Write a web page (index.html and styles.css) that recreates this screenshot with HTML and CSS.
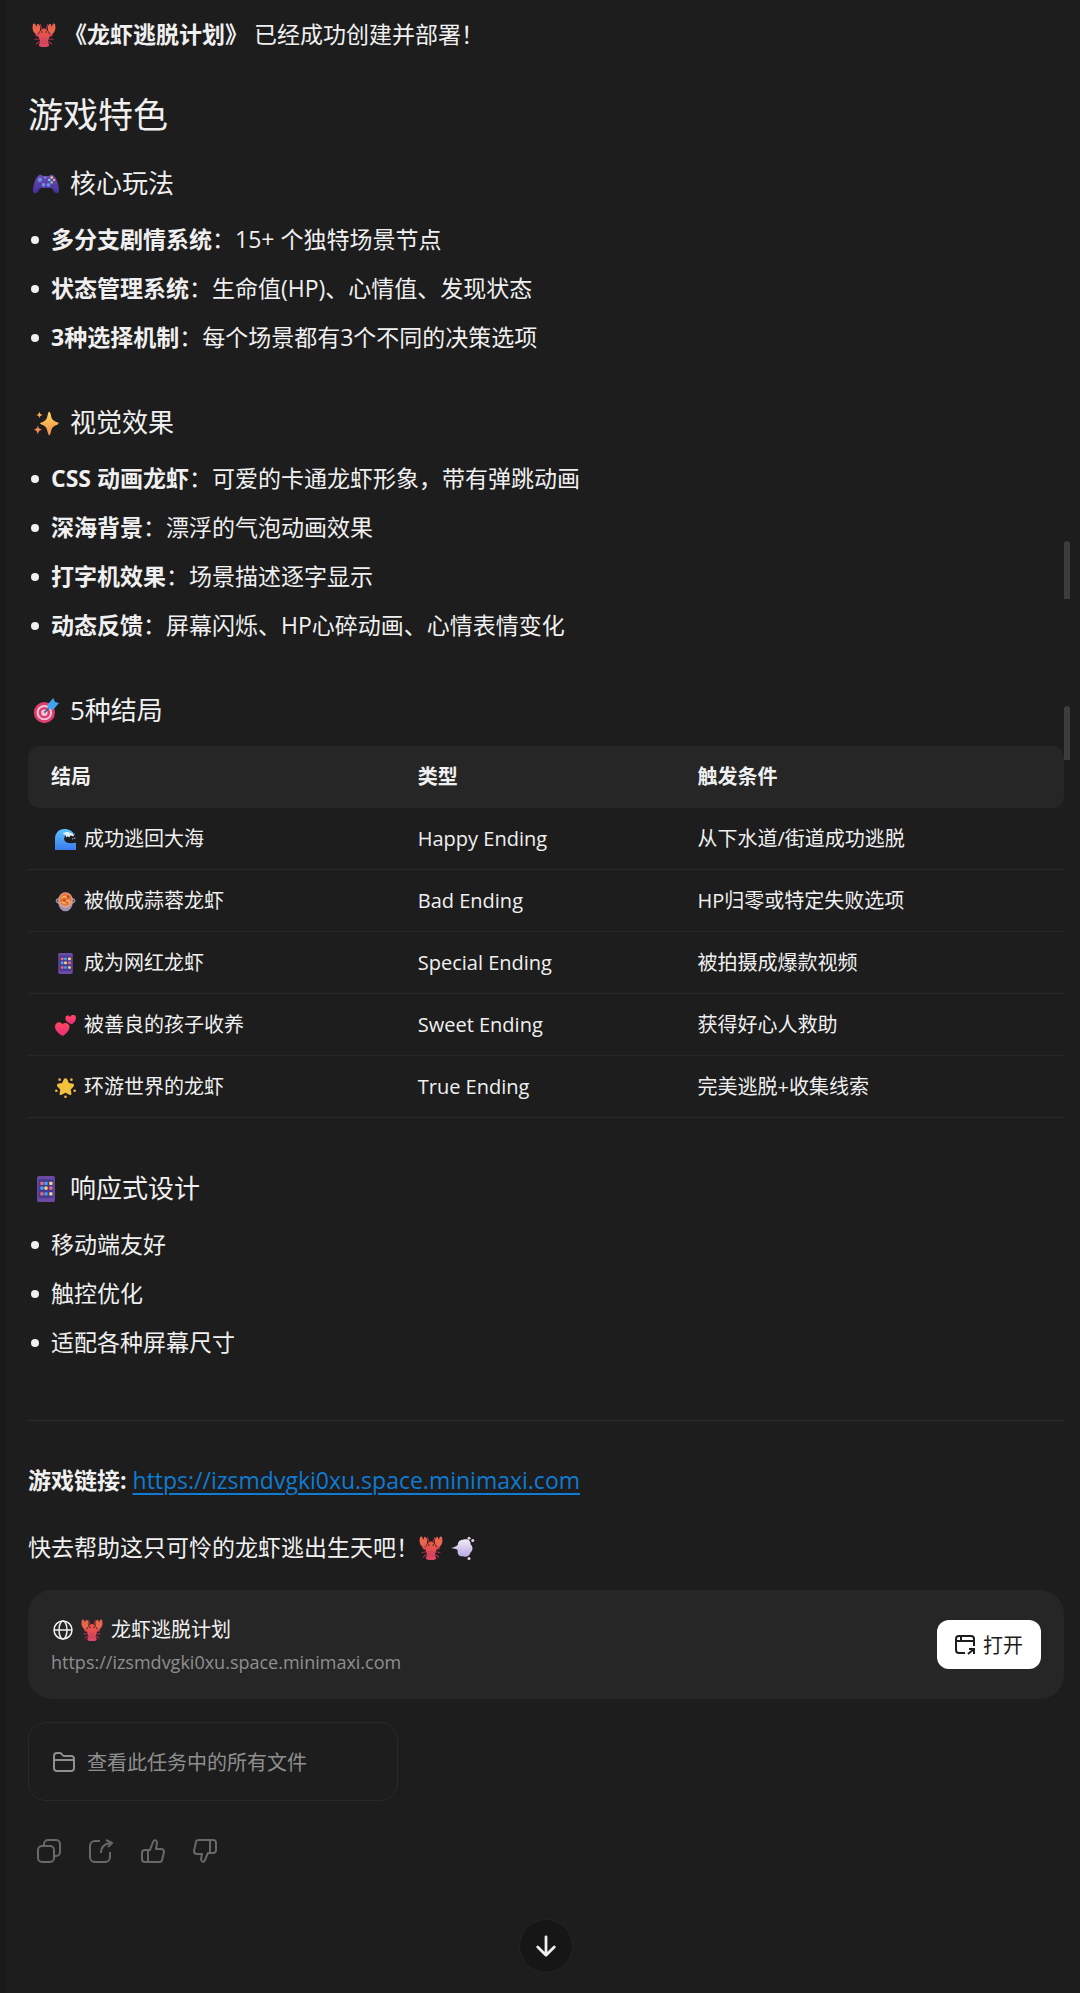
FILE: index.html
```html
<!DOCTYPE html>
<html lang="zh-CN">
<head>
  <meta charset="UTF-8" />
  <meta name="viewport" content="width=device-width, initial-scale=1.0"/>
  <title>龙虾逃脱计划</title>
  <link rel="stylesheet" href="styles.css">
</head>
<body>
  <!-- Shared icons -->
  <svg class="sprite" aria-hidden="true">
    <defs>
      <linearGradient id="gLobster" x1="0" y1="0" x2="0" y2="1">
        <stop offset="0" stop-color="#e8593f"/><stop offset="1" stop-color="#de4468"/>
      </linearGradient>
      <linearGradient id="gPad" x1="0" y1="0" x2="0" y2="1">
        <stop offset="0" stop-color="#6c4fb0"/><stop offset="1" stop-color="#44309a"/>
      </linearGradient>
      <linearGradient id="gSpark" x1="0" y1="0" x2="0" y2="1">
        <stop offset="0" stop-color="#ffd95e"/><stop offset="1" stop-color="#f78a4a"/>
      </linearGradient>
      <linearGradient id="gWave" x1="0" y1="0" x2="0" y2="1">
        <stop offset="0" stop-color="#5cc4fb"/><stop offset="1" stop-color="#3b7bf0"/>
      </linearGradient>
      <linearGradient id="gHeart" x1="0" y1="0" x2="0" y2="1">
        <stop offset="0" stop-color="#ff4a5c"/><stop offset="1" stop-color="#ee2a80"/>
      </linearGradient>
      <linearGradient id="gPuff" x1="0" y1="0" x2="0" y2="1">
        <stop offset="0" stop-color="#f1ebfa"/><stop offset="1" stop-color="#b9a9dc"/>
      </linearGradient>
    </defs>
    <symbol id="lobster" viewBox="0 0 32 32">
      <g fill="none" stroke="#a82f4c" stroke-width="1.6" stroke-linecap="round">
        <path d="M10 18 5 17M10 21l-6 1M11 24l-5 4M22 18l5-1M22 21l6 1M21 24l5 4M14 10 11 2M18 10l3-8"/>
      </g>
      <path d="M11 17C6 16 5 14 5 10M21 17c5-1 6-3 6-7" fill="none" stroke="#d94559" stroke-width="4"/>
      <path d="M1 3c0-2 2-3 3-2l2 4 1-4c3 0 4 3 4 6 0 4-2 7-5 7C2 14 0 9 1 3zM31 3c0-2-2-3-3-2l-2 4-1-4c-3 0-4 3-4 6 0 4 2 7 5 7 4 0 6-5 5-11z" fill="#e9654b"/>
      <path d="M16 7c5 2 7 6 7 11 0 3-2 5-2 7l2 5c-2 3-12 3-14 0l2-5c0-2-2-4-2-7 0-5 2-9 7-11z" fill="url(#gLobster)"/>
      <path d="M12 21h8M12 24h8M12 27h8" stroke="#c23a5c" stroke-width="1"/>
      <circle cx="13" cy="12" r="1" fill="#3a1620"/><circle cx="19" cy="12" r="1" fill="#3a1620"/>
    </symbol>
    <symbol id="gamepad" viewBox="0 0 32 32">
      <path d="M8 5c2-1 3 1 5 1h6c2 0 3-2 5-1 4 1 8 12 8 19 0 5-5 4-7 0-1-2-2-3-4-3H11c-2 0-3 1-4 3-2 4-7 5-7 0C0 17 4 6 8 5z" fill="url(#gPad)"/>
      <circle cx="8.500" cy="11" r="2.600" fill="#6d8de8"/><circle cx="13" cy="17" r="2.300" fill="#6d8de8"/><circle cx="19" cy="17" r="2.300" fill="#6d8de8"/>
      <circle cx="15" cy="8" r="1" fill="#9fc4ff"/>
      <circle cx="23" cy="8" r="1.500" fill="#ffd75a"/><circle cx="20" cy="11" r="1.500" fill="#62d2ff"/><circle cx="26" cy="11" r="1.500" fill="#ff8a8a"/><circle cx="23" cy="14" r="1.500" fill="#8de08a"/>
    </symbol>
    <symbol id="sparkles" viewBox="0 0 32 32" fill="url(#gSpark)">
      <path d="M20 2c1 0 1 1 2 4 1 5 2 7 8 9 2 1 2 2 0 3-6 2-7 4-8 9-1 3-1 4-2 4s-1-1-2-4c-1-5-2-7-7-9-3-1-3-2 0-3 5-2 6-4 7-9 1-3 1-4 2-4z"/>
      <path d="M8 2c1 3 1 3 4 4-3 1-3 1-4 4-1-3-1-3-4-4 3-1 3-1 4-4z"/>
      <path d="M6 19c1 4 2 4 5 5-3 1-4 2-5 6-1-4-2-5-5-6 3-1 4-1 5-5z" fill="#f58b5c"/>
    </symbol>
    <symbol id="target" viewBox="0 0 32 32">
      <circle cx="14" cy="18" r="13" fill="#dc3d6b"/><circle cx="14" cy="18" r="9.500" fill="#f2c4d8"/><circle cx="14" cy="18" r="7" fill="#dc3d6b"/><circle cx="14" cy="18" r="4" fill="#f2c4d8"/>
      <path d="M14 18 23 9" stroke="#505a8c" stroke-width="2"/>
      <path d="M18 8l7-8 2 5 5 1-7 8-7-1z" fill="#3fa4f2"/>
    </symbol>
    <symbol id="wave" viewBox="0 0 32 32">
      <path d="M0 32V15C0 6 6 0 14 0c8 0 14 4 15 9l-4-1c-7-1-11 2-11 7 0 6 7 8 18 6v11z" fill="url(#gWave)"/>
      <path d="M12 7c3-3 9-3 11-1 4 0 5 2 6 5-3 0-4-2-6-1l-1 3-3-2-2 2-1-4z" fill="#dff3ff"/>
      <g fill="#a4d8ff"><circle cx="29" cy="8" r="1"/><circle cx="27" cy="15" r="1"/><circle cx="30" cy="14" r="1"/></g>
    </symbol>
    <symbol id="pan" viewBox="0 0 32 32">
      <ellipse cx="16" cy="15" rx="14" ry="5" fill="none" stroke="#9a8fa8" stroke-width="2.500"/>
      <ellipse cx="16" cy="17" rx="11" ry="14" fill="#9d8fb5"/>
      <ellipse cx="16" cy="14" rx="11" ry="12" fill="#d8a090"/>
      <ellipse cx="16" cy="13" rx="9" ry="9.500" fill="#e87535"/>
      <path d="M11 10c2-3 5-2 6 0M18 15c3-2 5 0 4 3M11 17l4 2" fill="none" stroke="#ffc069" stroke-width="2" stroke-linecap="round"/>
      <circle cx="20" cy="9" r="2" fill="#c4412c"/><circle cx="14" cy="14" r="2" fill="#bd4a2c"/>
    </symbol>
    <symbol id="phone" viewBox="0 0 32 32">
      <rect x="5" y="0" width="22" height="32" rx="2" fill="#6b4aa3"/>
      <rect x="7" y="4" width="18" height="23" rx="1" fill="#453a8e"/>
      <g fill="#ee6b75"><rect x="9" y="7" width="4" height="4" rx="1"/><rect x="20" y="13" width="4" height="4" rx="1"/><rect x="9" y="20" width="4" height="4" rx="1"/></g>
      <g fill="#42a5f5"><rect x="14" y="7" width="4" height="4" rx="1"/><rect x="9" y="13" width="4" height="4" rx="1"/><rect x="14" y="20" width="4" height="4" rx="1"/></g>
      <g fill="#ffd77a"><rect x="20" y="7" width="4" height="4" rx="1"/><rect x="14" y="13" width="4" height="4" rx="1"/><rect x="20" y="20" width="4" height="4" rx="1"/></g>
    </symbol>
    <symbol id="hearts" viewBox="0 0 32 32" fill="url(#gHeart)">
      <path d="M12 32C6 29 0 24 0 18c0-7 8-9 11-4 4-4 12-1 11 5-1 6-6 10-10 13z"/>
      <path d="M26 14c-5-1-9-4-10-7-1-6 4-8 7-4 2-5 9-4 9 1 0 4-3 8-6 10z"/>
    </symbol>
    <symbol id="star" viewBox="0 0 32 32" fill="#f3c23c">
      <path d="M16 2c1 0 2 1 3 2l2 5 5 1c3 0 4 3 2 5l-4 4 1 6c0 2-1 3-3 2l-6-3-6 3c-2 1-3 0-3-2l1-6-4-4c-2-2-1-5 2-5l5-1 2-5c1-1 2-2 3-2z"/>
      <g fill="#f2b24a"><circle cx="7" cy="4" r="2"/><circle cx="25" cy="4" r="2"/><circle cx="2" cy="21" r="2"/><circle cx="30" cy="21" r="2"/><circle cx="16" cy="30" r="2"/></g>
    </symbol>
    <symbol id="dash" viewBox="0 0 32 32">
      <path d="M0 16c4-1 7-2 9-4 0-4 3-7 7-7 5-2 11 1 10 6 4 3 3 9 0 11-1 5-6 7-10 5-5 1-8-3-7-8-2-2-5-2-9-3z" fill="url(#gPuff)"/>
      <g fill="#ded4ee"><circle cx="24" cy="3" r="2"/><circle cx="29" cy="6" r="2"/><circle cx="24" cy="30" r="2"/></g>
    </symbol>
  </svg>

  <main class="message">
    <p class="intro"><svg class="emoji"><use href="#lobster"/></svg><strong>《龙虾逃脱计划》</strong> 已经成功创建并部署！</p>

    <h2>游戏特色</h2>

    <h3><svg class="emoji"><use href="#gamepad"/></svg>核心玩法</h3>
    <ul>
      <li><strong>多分支剧情系统</strong>：15+ 个独特场景节点</li>
      <li><strong>状态管理系统</strong>：生命值(HP)、心情值、发现状态</li>
      <li><strong>3种选择机制</strong>：每个场景都有3个不同的决策选项</li>
    </ul>

    <h3><svg class="emoji"><use href="#sparkles"/></svg>视觉效果</h3>
    <ul>
      <li><strong>CSS 动画龙虾</strong>：可爱的卡通龙虾形象，带有弹跳动画</li>
      <li><strong>深海背景</strong>：漂浮的气泡动画效果</li>
      <li><strong>打字机效果</strong>：场景描述逐字显示</li>
      <li><strong>动态反馈</strong>：屏幕闪烁、HP心碎动画、心情表情变化</li>
    </ul>

    <h3><svg class="emoji"><use href="#target"/></svg>5种结局</h3>
    <table>
      <thead>
        <tr><th class="col-name">结局</th><th class="col-type">类型</th><th>触发条件</th></tr>
      </thead>
      <tbody>
        <tr><td><svg class="emoji"><use href="#wave"/></svg>成功逃回大海</td><td>Happy Ending</td><td>从下水道/街道成功逃脱</td></tr>
        <tr><td><svg class="emoji"><use href="#pan"/></svg>被做成蒜蓉龙虾</td><td>Bad Ending</td><td>HP归零或特定失败选项</td></tr>
        <tr><td><svg class="emoji"><use href="#phone"/></svg>成为网红龙虾</td><td>Special Ending</td><td>被拍摄成爆款视频</td></tr>
        <tr><td><svg class="emoji"><use href="#hearts"/></svg>被善良的孩子收养</td><td>Sweet Ending</td><td>获得好心人救助</td></tr>
        <tr><td><svg class="emoji"><use href="#star"/></svg>环游世界的龙虾</td><td>True Ending</td><td>完美逃脱+收集线索</td></tr>
      </tbody>
    </table>

    <h3 class="after-table"><svg class="emoji"><use href="#phone"/></svg>响应式设计</h3>
    <ul>
      <li>移动端友好</li>
      <li>触控优化</li>
      <li>适配各种屏幕尺寸</li>
    </ul>

    <hr>

    <p class="game-link"><strong>游戏链接:</strong> <a href="https://izsmdvgki0xu.space.minimaxi.com">https://izsmdvgki0xu.space.minimaxi.com</a></p>
    <p class="outro">快去帮助这只可怜的龙虾逃出生天吧！<svg class="emoji"><use href="#lobster"/></svg><svg class="emoji"><use href="#dash"/></svg></p>

    <section class="site-card">
      <div class="site-info">
        <div class="site-title">
          <svg class="globe" viewBox="0 0 20 20"><circle cx="10" cy="10" r="9"/><ellipse cx="10" cy="10" rx="4" ry="9"/><path d="M1 10h18"/></svg>
          <svg class="emoji"><use href="#lobster"/></svg>
          <span>龙虾逃脱计划</span>
        </div>
        <div class="site-url">https://izsmdvgki0xu.space.minimaxi.com</div>
      </div>
      <button class="open-btn" type="button">
        <svg viewBox="0 0 20 20"><path d="M10 18H4a3 3 0 0 1-3-3V4a3 3 0 0 1 3-3h12a3 3 0 0 1 3 3v7M1 6h18M6 1v5M13 19l6-5M14 14h5v5"/></svg>
        打开
      </button>
    </section>

    <button class="files-btn" type="button">
      <svg viewBox="0 0 22 20"><path d="M1 8V4a3 3 0 0 1 3-3h3c2 0 2 3 4 3h7a3 3 0 0 1 3 3v9a3 3 0 0 1-3 3H4a3 3 0 0 1-3-3V8h20"/></svg>
      查看此任务中的所有文件
    </button>

    <div class="actions">
      <button type="button" aria-label="复制"><svg viewBox="0 0 24 24"><rect x="1" y="7" width="16" height="16" rx="4"/><path d="M7 7V5a4 4 0 0 1 4-4h8a4 4 0 0 1 4 4v8a4 4 0 0 1-4 4h-2"/></svg></button>
      <button type="button" aria-label="分享"><svg viewBox="0 0 24 24"><path d="M11 2H6a5 5 0 0 0-5 5v11a5 5 0 0 0 5 5h10a5 5 0 0 0 5-5v-5M12 14c0-5 3-9 9-10M17 1l6 3-4 4"/></svg></button>
      <button type="button" aria-label="赞"><svg viewBox="0 0 24 24"><path d="M7 11h2l3-8c1-3 4-2 4 1l-1 6h5c2 0 3 1 3 3l-2 8c0 1-1 2-3 2H4c-2 0-3-1-3-3v-6c0-2 1-3 3-3h3v12"/></svg></button>
      <button type="button" aria-label="踩"><svg viewBox="0 0 24 24"><path d="M17 14h-2l-3 7c-1 3-4 2-4-1l1-5H4c-2 0-3-1-3-3l2-9c0-1 1-2 3-2h14c2 0 3 1 3 3v7c0 2-1 3-3 3h-3V1"/></svg></button>
    </div>

    <button class="scroll-down" type="button" aria-label="滚动到底部">
      <svg viewBox="0 0 24 24"><path d="M12 2v20M3 13l9 9 9-9"/></svg>
    </button>

    <span class="thumb thumb-outer"></span>
    <span class="thumb thumb-inner"></span>
  </main>
</body>
</html>
```
FILE: styles.css
```css
* { margin: 0; padding: 0; box-sizing: border-box; }

body {
  background-color: #1d1d1d;
  color: #f0f0f0;
  font-family: "Open Sans", "Noto Sans CJK SC", sans-serif;
  font-size: 23px;
  line-height: 36px;
}

button { font-family: inherit; cursor: pointer; }

svg { flex-shrink: 0; }

.sprite { position: absolute; width: 0; height: 0; }

.message {
  position: relative;
  display: flex;
  flex-direction: column;
  padding: 16px 16px 20px 22px;
  border-left: 6px solid #191919;
}

.emoji {
  width: 24px;
  height: 24px;
  margin: 0 8px 0 4px;
  vertical-align: -4px;
}

h2 {
  margin-top: 39px;
  font-size: 35px;
  font-weight: 400;
  line-height: 48px;
}

h3 {
  margin-top: 48px;
  font-size: 26px;
  font-weight: 400;
  line-height: 36px;
}

h2 + h3 { margin-top: 26px; }
h3.after-table { margin-top: 52px; }

h3 .emoji {
  width: 26px;
  height: 26px;
  margin: 0 11px 0 5px;
}

/* Lists */
ul {
  display: flex;
  flex-direction: column;
  gap: 11px;
  margin-top: 19px;
  list-style: none;
}

li {
  line-height: 38px;
}

li::before {
  content: "";
  display: inline-block;
  width: 8px;
  height: 8px;
  margin: 0 12px 0 3px;
  border-radius: 50%;
  background-color: #f0f0f0;
  vertical-align: 4px;
}

/* Endings table */
table {
  width: 100%;
  margin-top: 18px;
  table-layout: fixed;
  border-collapse: separate;
  border-spacing: 0;
  font-size: 20px;
  line-height: 30px;
}

th, td {
  height: 62px;
  padding: 0 23px;
  text-align: left;
}

th { background-color: #262626; }
th:first-child { border-radius: 12px 0 0 12px; }
th:last-child { border-radius: 0 12px 12px 0; }
td { border-bottom: 1px solid #282828; }

.col-name { width: 35.4%; }
.col-type { width: 27%; }

td .emoji {
  width: 21px;
  height: 21px;
}

hr {
  margin-top: 59px;
  border: none;
  border-top: 1px solid #2c2c2c;
}

.game-link { margin-top: 41px; }

.game-link a {
  color: #0f7bd3;
  text-decoration: underline;
  text-decoration-thickness: 2px;
  text-underline-offset: 4px;
}

.outro { margin-top: 31px; }
.outro .emoji { margin: 0 8px 0 0; }

/* Deployed site */
.site-card {
  display: flex;
  justify-content: space-between;
  align-items: center;
  margin-top: 25px;
  padding: 22px 23px;
  border-radius: 24px;
  background-color: #262626;
}

.site-title {
  display: flex;
  align-items: center;
  font-size: 20px;
  line-height: 35px;
}

.site-title .emoji {
  width: 22px;
  height: 22px;
  margin: 0 8px;
}

.globe {
  width: 20px;
  height: 20px;
  margin-left: 2px;
  fill: none;
  stroke: #f0f0f0;
  stroke-width: 1.5;
}

.site-url {
  color: #8f8f8f;
  font-size: 18px;
  line-height: 30px;
}

.open-btn {
  display: flex;
  align-items: center;
  gap: 8px;
  height: 49px;
  padding: 0 18px;
  border: none;
  border-radius: 12px;
  background-color: #fff;
  color: #1d1d1d;
  font-size: 20px;
}

.open-btn svg {
  width: 20px;
  height: 20px;
  fill: none;
  stroke: #1d1d1d;
  stroke-width: 2;
}

.files-btn {
  display: flex;
  align-items: center;
  gap: 12px;
  width: 370px;
  max-width: 100%;
  height: 79px;
  margin-top: 23px;
  padding: 0 24px;
  border: 1px solid #292929;
  border-radius: 18px;
  background: none;
  color: #8f8f8f;
  font-size: 20px;
}

.files-btn svg {
  width: 22px;
  height: 20px;
  fill: none;
  stroke: #8f8f8f;
  stroke-width: 2;
}

.actions {
  display: flex;
  gap: 28px;
  margin-top: 38px;
  padding-left: 9px;
}

.actions button {
  width: 24px;
  height: 24px;
  border: none;
  background: none;
}

.actions svg {
  display: block;
  width: 24px;
  height: 24px;
  fill: none;
  stroke: #686868;
  stroke-width: 2;
  stroke-linejoin: round;
}

.scroll-down {
  display: flex;
  align-items: center;
  justify-content: center;
  align-self: center;
  width: 54px;
  height: 54px;
  margin-top: 56px;
  border: 1px solid #242424;
  border-radius: 50%;
  background-color: #161616;
}

.scroll-down svg {
  width: 22px;
  height: 22px;
  fill: none;
  stroke: #f0f0f0;
  stroke-width: 3;
  stroke-linecap: round;
  stroke-linejoin: round;
}

/* Scrollbar thumbs float over the message */
.thumb {
  position: absolute;
  right: 10px;
  width: 6px;
  border-radius: 3px 3px 0 0;
  background-color: #3d3d3d;
}

.thumb-outer { top: 541px; height: 58px; }
.thumb-inner { top: 706px; height: 54px; }
```
